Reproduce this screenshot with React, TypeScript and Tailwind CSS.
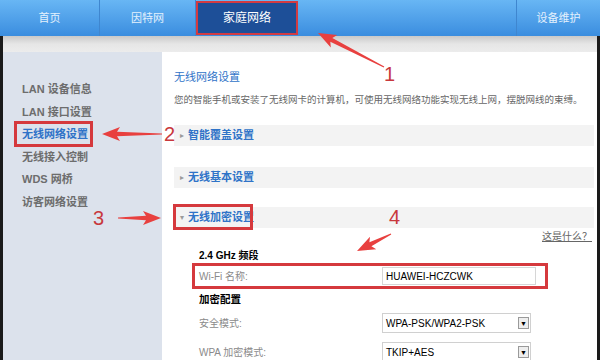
import React from 'react';

const font = { fontFamily: '"Liberation Sans", "Noto Sans CJK SC", sans-serif' };

// annotation arrow: thin tail widening into a triangular head
function arrowPoints(x1: number, y1: number, x2: number, y2: number) {
  const len = Math.hypot(x2 - x1, y2 - y1);
  const ux = (x2 - x1) / len;
  const uy = (y2 - y1) / len;
  const nx = -uy;
  const ny = ux;
  const headLen = 15;
  const bx = x2 - ux * headLen;
  const by = y2 - uy * headLen;
  const pts = [
    [x1 + nx * 0.6, y1 + ny * 0.6],
    [bx + nx * 2.2, by + ny * 2.2],
    [bx - ux * 3 + nx * 7, by - uy * 3 + ny * 7],
    [x2, y2],
    [bx - ux * 3 - nx * 7, by - uy * 3 - ny * 7],
    [bx - nx * 2.2, by - ny * 2.2],
    [x1 - nx * 0.6, y1 - ny * 0.6],
  ];
  return pts.map((p) => p.join(',')).join(' ');
}

const tabs = [
  { label: '首页', w: 'w-[100px]' },
  { label: '因特网', w: 'w-[96px]' },
];

const sideItems = ['LAN 设备信息', 'LAN 接口设置', '无线网络设置', '无线接入控制', 'WDS 网桥', '访客网络设置'];

function SectionBar({ title, open }: { title: string; open?: boolean }) {
  return (
    <div className="h-[21px] bg-[#f3f3f3] flex items-center pl-[6px]">
      <span className="text-[8px] text-[#9a9a9a] w-[8px]">{open ? '▾' : '▸'}</span>
      <span className="relative text-[11px] font-bold text-[#2f73c8]">
        {title}
        {open && (
          <span className="absolute left-[-15px] top-[-5px] w-[80px] h-[26px] border-[3px] border-[#d5393d]" />
        )}
      </span>
    </div>
  );
}

function SelectBox({ value }: { value: string }) {
  return (
    <div className="w-[149px] h-[20px] border border-[#d0d0d0] bg-white flex items-center justify-between pl-[3px] pr-[1px]">
      <span className="text-[10px] text-black">{value}</span>
      <span className="w-[11px] h-[12px] border border-[#9a9a9a] bg-[#eeeeee] flex items-center justify-center text-[7px] leading-none text-black">
        ▼
      </span>
    </div>
  );
}

export default function App() {
  return (
    <div className="relative w-[600px] h-[360px] overflow-hidden bg-white" style={font}>
      {/* top navigation */}
      <div className="h-[36px] flex bg-gradient-to-b from-[#68b6f4] to-[#3a8ddf]">
        {tabs.map((t) => (
          <div key={t.label} className={`${t.w} flex items-center justify-center border-r border-[#3f86cf] text-[11px] text-[#e4f1fd]`}>
            {t.label}
          </div>
        ))}
        <div className="w-[102px] mt-[1px] h-[34px] bg-[#1d4f98] border-2 border-[#d23b42] flex items-center justify-center text-[12px] text-white">
          家庭网络
        </div>
        <div className="flex-1" />
        <div className="w-[84px] border-l border-[#3f86cf] flex items-center justify-center text-[11px] text-[#e4f1fd]">
          设备维护
        </div>
      </div>

      <div className="h-[324px] flex flex-col border-x-[3px] border-[#1a1a1a]">
        <div className="h-[16px] shrink-0 bg-gradient-to-b from-[#c9c9c9] via-[#e6e6e6] to-[#ececec]" />
        <div className="flex-1 min-h-0 flex overflow-hidden">
          {/* sidebar */}
          <div className="w-[159px] shrink-0 bg-[#dce2ec] pt-[26px] pl-[19px]">
            {sideItems.map((item, i) => (
              <div key={item} className="h-[22.6px] flex items-center">
                <span className={`relative text-[11px] font-bold ${i === 2 ? 'text-[#2f73c8]' : 'text-[#6d6d6d]'}`}>
                  {item}
                  {i === 2 && (
                    <span className="absolute left-[-8px] top-[-5px] w-[79px] h-[26px] border-[3px] border-[#d5393d]" />
                  )}
                </span>
              </div>
            ))}
          </div>

          {/* content */}
          <div className="flex-1 pt-[18px] pl-[12px] pr-[3px]">
            <div className="text-[11px] leading-[14px] text-[#2f73c8]">无线网络设置</div>
            <div className="mt-[9px] text-[9.5px] leading-[14px] text-[#666] whitespace-nowrap">
              您的智能手机或安装了无线网卡的计算机，可使用无线网络功能实现无线上网，摆脱网线的束缚。
            </div>
            <div className="mt-[18px]">
              <SectionBar title="智能覆盖设置" />
            </div>
            <div className="mt-[21px]">
              <SectionBar title="无线基本设置" />
            </div>
            <div className="mt-[19px]">
              <SectionBar title="无线加密设置" open />
            </div>
            <div className="flex justify-end mt-[2px] pr-[2px]">
              <span className="text-[10px] leading-[13px] text-[#666] underline">这是什么？</span>
            </div>
            <div className="pl-[25px] mt-[6px]">
              <div className="text-[10px] leading-[13px] font-bold text-black">2.4 GHz 频段</div>
              <div className="mt-[1px] ml-[-7px] w-[356px] h-[26px] border-[3px] border-[#d5393d] flex items-center pl-[4px]">
                <span className="w-[183px] text-[10px] text-[#8a8a8a]">Wi-Fi 名称:</span>
                <div className="w-[154px] h-[18px] border border-[#d6d6d6] flex items-center pl-[3px] text-[10px] text-black">
                  HUAWEI-HCZCWK
                </div>
              </div>
              <div className="mt-[4px] text-[10.5px] leading-[13px] font-bold text-black">加密配置</div>
              <div className="mt-[7px] flex items-center">
                <span className="w-[183px] text-[10px] text-[#8a8a8a]">安全模式:</span>
                <SelectBox value="WPA-PSK/WPA2-PSK" />
              </div>
              <div className="mt-[9px] flex items-center">
                <span className="w-[183px] text-[10px] text-[#8a8a8a]">WPA 加密模式:</span>
                <SelectBox value="TKIP+AES" />
              </div>
            </div>
          </div>
        </div>
      </div>

      {/* annotations */}
      <svg className="absolute inset-0 pointer-events-none" width="600" height="360">
        <polygon points={arrowPoints(384, 67, 318, 33)} fill="#e8403f" />
        <polygon points={arrowPoints(162, 134, 102, 134)} fill="#e8403f" />
        <polygon points={arrowPoints(118, 218, 161, 218)} fill="#e8403f" />
        <polygon points={arrowPoints(391, 234, 357, 251)} fill="#e8403f" />
      </svg>
      <span className="absolute left-[384px] top-[63px] text-[20px] leading-[22px] text-[#c8383c]">1</span>
      <span className="absolute left-[164px] top-[123px] text-[20px] leading-[22px] text-[#c8383c]">2</span>
      <span className="absolute left-[93px] top-[207px] text-[20px] leading-[22px] text-[#c8383c]">3</span>
      <span className="absolute left-[389px] top-[206px] text-[20px] leading-[22px] text-[#c8383c]">4</span>
    </div>
  );
}
